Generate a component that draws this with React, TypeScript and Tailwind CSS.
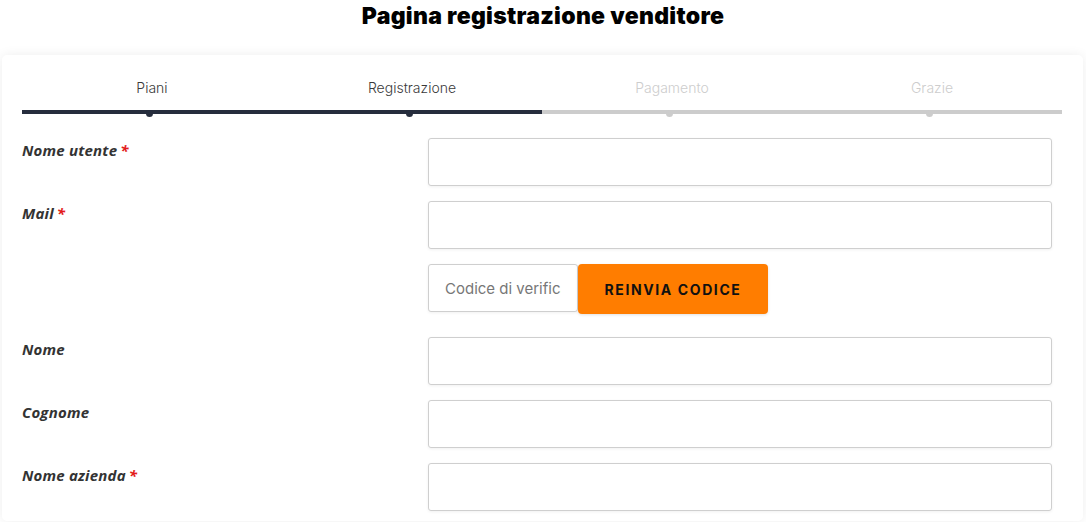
import { useState } from 'react'

const steps = [
  { label: 'Piani', done: true },
  { label: 'Registrazione', done: true },
  { label: 'Pagamento', done: false },
  { label: 'Grazie', done: false },
]

function Field({ label, required }: { label: string; required?: boolean }) {
  return (
    <div className="flex">
      <div className="w-[406px] pt-[2px] text-[15px] font-bold italic tracking-[0.2px] text-[#333] leading-[20px]">
        {label}
        {required && <span className="ml-[3px] text-[#e31b1b]">*</span>}
      </div>
      <input
        type="text"
        className="h-[48px] w-[624px] rounded-[3px] border border-[#cfcfcf] bg-white px-4 shadow-[0_1px_3px_rgba(0,0,0,0.06)] outline-none"
      />
    </div>
  )
}

export default function App() {
  const [code, setCode] = useState('')

  return (
    <div className="min-h-screen bg-white font-['Open_Sans',sans-serif]">
      <h1 className="pt-[2px] text-center font-['Inter',sans-serif] text-[23px] font-black leading-[29px] tracking-[0.3px] text-black">
        Pagina registrazione venditore
      </h1>

      <div className="mx-[2px] mt-[24px] w-[1081px] rounded-[5px] bg-white px-[20px] pt-[23px] pb-[10px] shadow-[0_0_12px_rgba(0,0,0,0.07)]">
        {/* step bar */}
        <div className="w-[1040px]">
          <div className="grid grid-cols-4">
            {steps.map((s) => (
              <div
                key={s.label}
                className={`text-center font-['Inter',sans-serif] text-[14px] font-light leading-[20px] ${
                  s.done ? 'text-[#3a3a3a]' : 'text-[#cdcdcd]'
                }`}
              >
                {s.label}
              </div>
            ))}
          </div>
          <div className="mt-[12px] grid grid-cols-4">
            {steps.map((s, i) => (
              <div
                key={s.label}
                className={`relative h-[4px] ${i < 2 ? 'bg-[#262d3d]' : 'bg-[#cccccc]'}`}
              >
                <span
                  className={`absolute left-[124px] top-[0px] h-[7px] w-[7px] rounded-full ${
                    s.done ? 'bg-[#262d3d]' : 'bg-[#cccccc]'
                  }`}
                />
              </div>
            ))}
          </div>
        </div>

        {/* form */}
        <div className="mt-[24px] flex flex-col">
          <Field label="Nome utente" required />
          <div className="mt-[15px]">
            <Field label="Mail" required />
          </div>
          <div className="mt-[15px] flex">
            <div className="w-[406px]" />
            <input
              type="text"
              value={code}
              onChange={(e) => setCode(e.target.value)}
              placeholder="Codice di verifica"
              className="h-[48px] w-[150px] rounded-[3px] border border-[#cfcfcf] bg-white px-4 font-['Inter',sans-serif] text-[15px] text-[#333] placeholder:text-[#777] shadow-[0_1px_3px_rgba(0,0,0,0.06)] outline-none"
            />
            <button className="h-[50px] w-[190px] rounded-[4px] bg-[#ff7d00] font-['Inter',sans-serif] text-[14px] font-bold tracking-[1.6px] text-[#111] shadow-[0_1px_3px_rgba(0,0,0,0.12)]">
              REINVIA CODICE
            </button>
          </div>
          <div className="mt-[23px]">
            <Field label="Nome" />
          </div>
          <div className="mt-[15px]">
            <Field label="Cognome" />
          </div>
          <div className="mt-[15px]">
            <Field label="Nome azienda" required />
          </div>
        </div>
      </div>
    </div>
  )
}
